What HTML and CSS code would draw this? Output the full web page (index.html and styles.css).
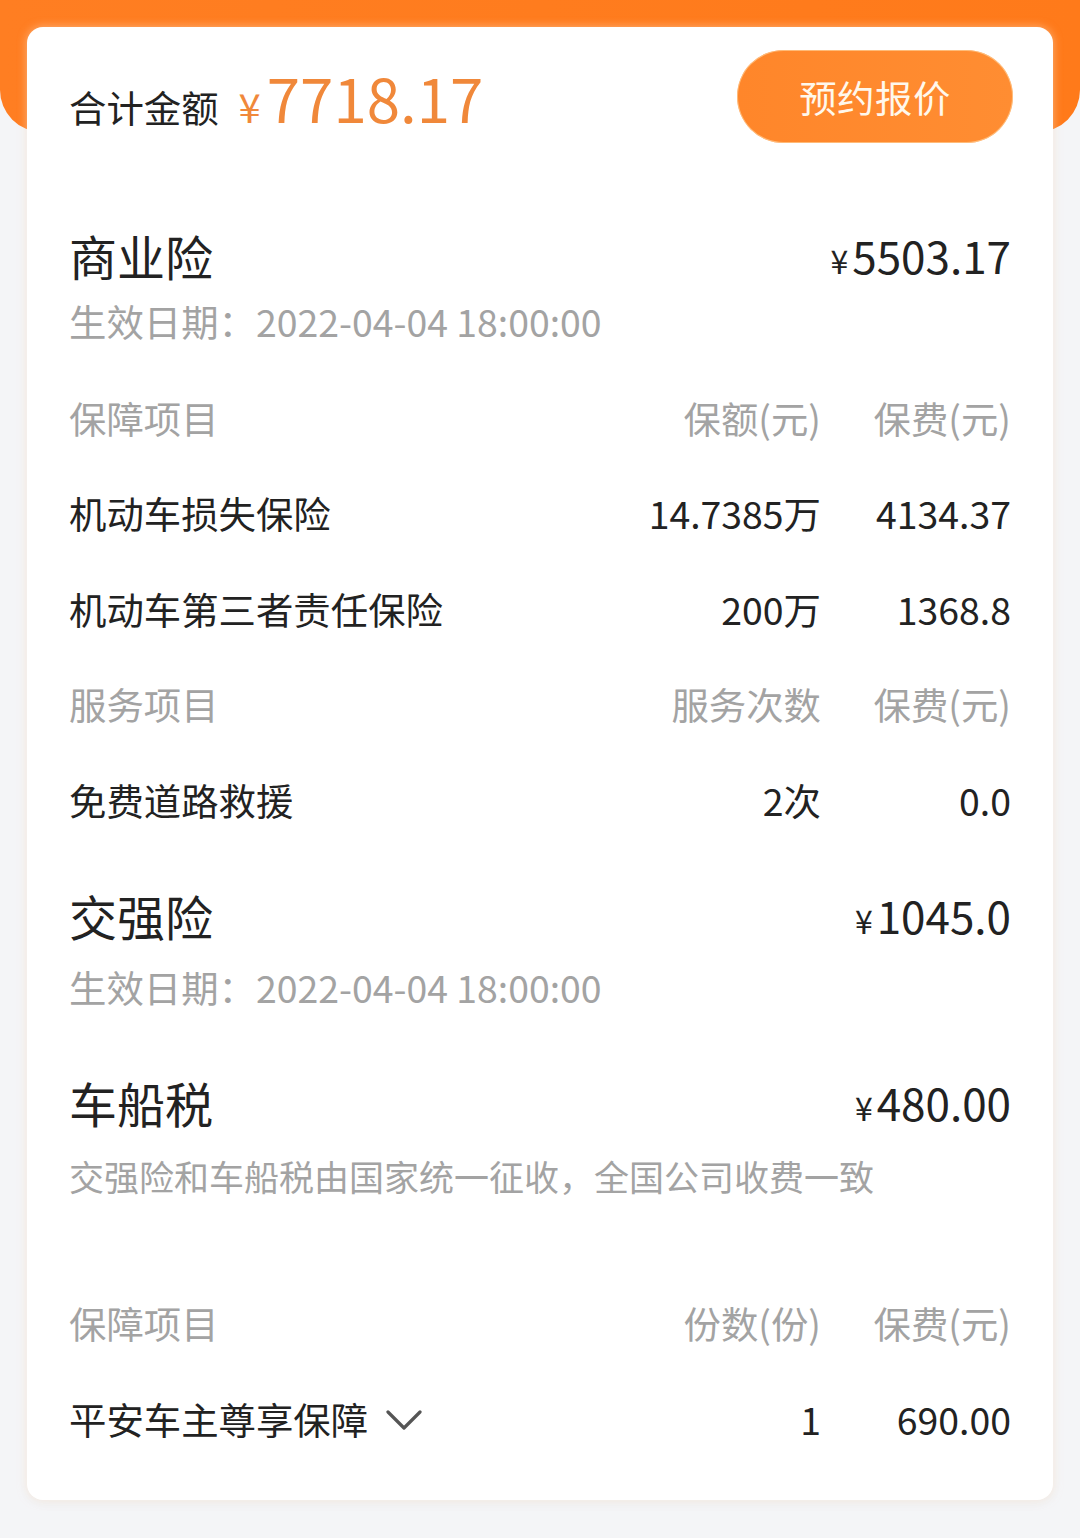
FILE: index.html
```html
<!DOCTYPE html>
<html lang="zh-CN">
<head>
<meta charset="utf-8">
<title>报价</title>
<link rel="stylesheet" href="styles.css">
</head>
<body>
<div class="page">
  <div class="card">
    <div class="head">
      <div class="total">
        <span class="total-label">合计金额</span>
        <span class="total-yen">¥</span>
        <span class="total-num">7718.17</span>
      </div>
      <div class="btn">预约报价</div>
    </div>

    <div class="sec-title s1">
      <span class="sec-name">商业险</span>
      <span class="sec-amt"><span class="yen">¥</span>5503.17</span>
    </div>
    <div class="sec-sub">生效日期：2022-04-04 18:00:00</div>

    <div class="table t1">
      <div class="row th"><span class="c1">保障项目</span><span class="c2">保额(元)</span><span class="c3">保费(元)</span></div>
      <div class="row"><span class="c1">机动车损失保险</span><span class="c2">14.7385万</span><span class="c3">4134.37</span></div>
      <div class="row"><span class="c1">机动车第三者责任保险</span><span class="c2">200万</span><span class="c3">1368.8</span></div>
      <div class="row th"><span class="c1">服务项目</span><span class="c2">服务次数</span><span class="c3">保费(元)</span></div>
      <div class="row"><span class="c1">免费道路救援</span><span class="c2">2次</span><span class="c3">0.0</span></div>
    </div>

    <div class="sec-title s2">
      <span class="sec-name">交强险</span>
      <span class="sec-amt"><span class="yen">¥</span>1045.0</span>
    </div>
    <div class="sec-sub d2">生效日期：2022-04-04 18:00:00</div>

    <div class="sec-title s3">
      <span class="sec-name">车船税</span>
      <span class="sec-amt"><span class="yen">¥</span>480.00</span>
    </div>
    <div class="sec-sub d3">交强险和车船税由国家统一征收，全国公司收费一致</div>

    <div class="table t2">
      <div class="row th"><span class="c1">保障项目</span><span class="c2">份数(份)</span><span class="c3">保费(元)</span></div>
      <div class="row"><span class="c1">平安车主尊享保障<svg class="chev" width="36" height="22" viewBox="0 0 36 22"><path d="M2 3 L18 19 L34 3" fill="none" stroke="#555" stroke-width="3.2" stroke-linecap="round" stroke-linejoin="round"/></svg></span><span class="c2">1</span><span class="c3">690.00</span></div>
    </div>
  </div>
</div>
</body>
</html>
```

FILE: styles.css
```css
html, body {
  margin: 0;
  padding: 0;
}
body {
  background: #f4f5f7;
  font-family: "Noto Sans CJK SC", "Noto Sans", sans-serif;
  color: #222;
}
.page {
  position: relative;
  width: 1080px;
  min-height: 1538px;
  padding-top: 27px;
  box-sizing: border-box;
}
.page::before {
  content: "";
  position: absolute;
  left: 0;
  top: 0;
  width: 1080px;
  height: 132px;
  border-radius: 0 0 42px 42px;
  background: linear-gradient(90deg, #ff7e22 0%, #ff7a1a 100%);
}
.card {
  position: relative;
  margin: 0 27px;
  background: #fff;
  border-radius: 16px;
  padding: 23px 42px 33px 42px;
  box-shadow: 0 0 10px rgba(255, 230, 205, 0.55), 0 4px 12px rgba(0, 0, 0, 0.03);
}
.head {
  display: flex;
  align-items: center;
  justify-content: space-between;
  height: 93px;
}
.total {
  display: flex;
  align-items: baseline;
  margin-top: 0;
}
.total-label {
  font-size: 37.4px;
  color: #222;
}
.total-yen {
  font-size: 40px;
  color: #f0883a;
  margin-left: 20px;
  margin-right: 6px;
}
.total-num {
  font-size: 60px;
  color: #f0883a;
}
.btn {
  width: 276px;
  height: 93px;
  margin-right: -2px;
  border-radius: 47px;
  background: linear-gradient(90deg, #ff862a 0%, #ff8d32 100%);
  box-shadow: inset 0 0 0 1px rgba(255, 220, 170, 0.6);
  color: #fff8ec;
  font-size: 37.4px;
  display: flex;
  align-items: center;
  justify-content: center;
  letter-spacing: 0.5px;
}
.sec-title {
  display: flex;
  align-items: center;
  justify-content: space-between;
  height: 60px;
}
.s1 { margin-top: 82px; }
.s2 { margin-top: 37px; }
.s3 { margin-top: 60px; }
.sec-name {
  font-size: 48px;
  color: #222;
}
.sec-amt {
  font-size: 44px;
  color: #222;
  display: flex;
  align-items: baseline;
}
.yen {
  font-size: 32px;
  margin-right: 4px;
}
.sec-sub {
  height: 50px;
  display: flex;
  align-items: center;
  font-size: 37.4px;
  color: #a3a3a3;
  margin-top: 11px;
}
.d2 { margin-top: 17px; }
.d3 { margin-top: 19px; font-size: 35px; }
.t1 { margin-top: 24px; }
.t2 { margin-top: 75px; }
.row {
  display: flex;
  align-items: center;
  height: 95.5px;
  font-size: 37.4px;
  color: #222;
}
.row.th {
  color: #a3a3a3;
}
.c1 {
  flex: 1;
  display: flex;
  align-items: center;
}
.c2 {
  text-align: right;
}
.c3 {
  width: 190px;
  text-align: right;
}
.chev {
  margin-left: 18px;
  margin-top: 2px;
}
```
